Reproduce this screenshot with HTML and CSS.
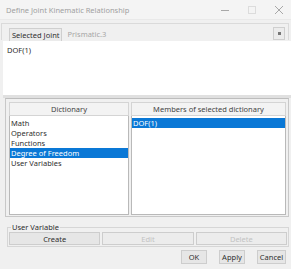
FILE: index.html
```html
<!DOCTYPE html>
<html lang="en">

<head>
   <meta charset="UTF-8">
   <title>Define Joint Kinematic Relationship</title>
   <link rel="stylesheet" href="styles.css">
</head>

<body>
   <div class="dialog">
      <div class="titlebar">
         <span class="title">Define Joint Kinematic Relationship</span>
         <div class="controls">
            <svg width="10" height="10" viewBox="0 0 10 10"><path d="M1 5.5h8" stroke="#a8a8a8" stroke-width="1"/></svg>
            <svg width="10" height="10" viewBox="0 0 10 10"><rect x="1.5" y="1.5" width="7" height="7" fill="none" stroke="#dcdcdc"/></svg>
            <svg width="10" height="10" viewBox="0 0 10 10"><path d="M1 1l8 8M9 1l-8 8" stroke="#a8a8a8" stroke-width="1"/></svg>
         </div>
      </div>

      <div class="joint-row">
         <span class="joint-label">Selected Joint</span>
         <span class="joint-value">Prismatic.3</span>
         <span class="joint-btn"><span class="dot"></span></span>
      </div>

      <div class="formula">DOF(1)</div>

      <div class="lists">
         <div class="col col-left">
            <div class="head">Dictionary</div>
            <ul class="list">
               <li>Math</li>
               <li>Operators</li>
               <li>Functions</li>
               <li class="selected">Degree of Freedom</li>
               <li>User Variables</li>
            </ul>
         </div>
         <div class="col col-right">
            <div class="head">Members of selected dictionary</div>
            <ul class="list">
               <li class="selected">DOF(1)</li>
            </ul>
         </div>
      </div>

      <fieldset class="group">
         <legend>User Variable</legend>
         <button class="btn">Create</button>
         <button class="btn" disabled>Edit</button>
         <button class="btn" disabled>Delete</button>
      </fieldset>

      <div class="footer">
         <button class="btn small">OK</button>
         <button class="btn small">Apply</button>
         <button class="btn small">Cancel</button>
      </div>
   </div>
</body>

</html>
```

FILE: styles.css
```css
body {
   margin: 0;
   font-family: "Noto Sans", "Open Sans", sans-serif;
   font-size: 7.5px;
   color: #2e2e2e;
   background-color: #f0f0f0;
}

.dialog {
   width: 291px;
   height: 269px;
   display: flex;
   flex-direction: column;
   overflow: hidden;
}

.titlebar {
   height: 19px;
   display: flex;
   align-items: center;
   justify-content: space-between;
   background-color: #f4f4f4;
   border-bottom: 1px solid #e9e9e9;
}

.title {
   padding-left: 6px;
   color: #a0a0a0;
   font-size: 7.5px;
}

.controls {
   display: flex;
   gap: 17px;
   padding-right: 7px;
}

.joint-row {
   display: flex;
   align-items: center;
   height: 16px;
   margin: 3px 2px 1px 1px;
   padding: 0 3px 0 7px;
   border: 1px solid #dadada;
   border-bottom: none;
}

.joint-label {
   height: 12px;
   line-height: 12px;
   margin-top: 4px;
   padding: 0 2px;
   border: 1px solid #cfcfcf;
   border-bottom: none;
   background-color: #ebebeb;
}

.joint-value {
   flex: 1;
   margin-left: 5px;
   margin-top: 3px;
   color: #a6a6a6;
}

.joint-btn {
   width: 10px;
   height: 11px;
   margin-top: 3px;
   display: flex;
   align-items: center;
   justify-content: center;
   border: 1px solid #cfcfcf;
   background-color: #ececec;
}

.dot {
   width: 3px;
   height: 3px;
   background-color: #777;
}

.formula {
   height: 46px;
   margin-left: 3px;
   padding: 4px 4px;
   background-color: #fff;
   border-bottom: 3px solid #e0e0e0;
}

.lists {
   display: flex;
   gap: 2px;
   height: 113px;
   margin: 0 2px 0 5px;
   padding: 3px 2px 1px 3px;
   border: 1px solid #c8c8c8;
   border-top-color: #bdbdbd;
}

.col {
   display: flex;
   flex-direction: column;
}

.col-left {
   width: 120px;
}

.col-right {
   flex: 1;
}

.head {
   height: 12px;
   line-height: 12px;
   text-align: center;
   color: #444;
   background-color: #f3f3f3;
   border: 1px solid #d4d4d4;
}

.list {
   flex: 1;
   list-style: none;
   margin: 0;
   padding: 2px 0 0 0;
   background-color: #fff;
   border: 1px solid #b9b9b9;
   border-top: none;
}

.list li {
   height: 10px;
   line-height: 10px;
   padding-left: 1px;
}

.list li.selected {
   background-color: #0a78d6;
   color: #fff;
}

.group {
   margin: 6px 2px 0 7px;
   padding: 1px 1px 1px 1px;
   display: flex;
   gap: 2px;
   border: 1px solid #d6d6d6;
}

.group legend {
   padding: 0 1px;
   margin-left: 2px;
   line-height: 8px;
}

.btn {
   font-family: inherit;
   font-size: 7.5px;
   color: #2e2e2e;
   height: 13px;
   padding: 0;
   background-color: #e6e6e6;
   border: 1px solid #cdcdcd;
}

.group .btn {
   flex: 1;
}

.btn:disabled {
   color: #c2c2c2;
   background-color: #ececec;
}

.footer {
   display: flex;
   justify-content: flex-end;
   gap: 12px;
   padding: 3px 5px 0 0;
}

.btn.small {
   width: 26px;
   height: 14px;
}

.footer .btn:last-child {
   width: 29px;
}
```
